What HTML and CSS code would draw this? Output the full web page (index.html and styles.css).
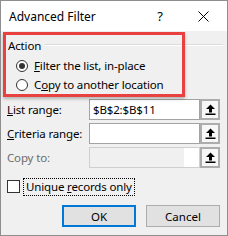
FILE: index.html
```html
<!DOCTYPE html>
<html lang="en">
<head>
    <meta charset="UTF-8">
    <title>Advanced Filter</title>
    <link rel="stylesheet" href="styles.css">
</head>
<body>
    <div class="dialog">
        <!-- Title bar -->
        <div class="titlebar">
            <span class="title">Advanced Filter</span>
            <span class="help">?</span>
            <span class="close">
                <svg width="11" height="11" viewBox="0 0 11 11"><path d="M0.5 0.5 L10.5 10.5 M10.5 0.5 L0.5 10.5" stroke="#000" stroke-width="1" fill="none"/></svg>
            </span>
        </div>

        <div class="content">
            <!-- Action group -->
            <div class="group-head">
                <span>Action</span>
                <span class="group-line"></span>
            </div>
            <div class="option">
                <span class="radio checked"></span>
                <span><u>F</u>ilter the list, in-place</span>
            </div>
            <div class="option">
                <span class="radio"></span>
                <span>C<u>o</u>py to another location</span>
            </div>

            <!-- Ranges -->
            <div class="field">
                <label><u>L</u>ist range:</label>
                <div class="range">$B$2:$B$11</div>
                <span class="pick"><svg width="11" height="11" viewBox="0 0 11 11"><path d="M5.5 0.5 L10 5 L7 5 L7 8.5 L4 8.5 L4 5 L1 5 Z" fill="#000"/><rect x="0.5" y="9.5" width="10" height="1.5" fill="#000"/></svg></span>
            </div>
            <div class="field">
                <label><u>C</u>riteria range:</label>
                <div class="range"></div>
                <span class="pick"><svg width="11" height="11" viewBox="0 0 11 11"><path d="M5.5 0.5 L10 5 L7 5 L7 8.5 L4 8.5 L4 5 L1 5 Z" fill="#000"/><rect x="0.5" y="9.5" width="10" height="1.5" fill="#000"/></svg></span>
            </div>
            <div class="field disabled">
                <label>Copy to:</label>
                <div class="range"></div>
                <span class="pick"><svg width="11" height="11" viewBox="0 0 11 11"><path d="M5.5 0.5 L10 5 L7 5 L7 8.5 L4 8.5 L4 5 L1 5 Z" fill="#000"/><rect x="0.5" y="9.5" width="10" height="1.5" fill="#000"/></svg></span>
            </div>

            <!-- Unique records -->
            <div class="check-row">
                <span class="checkbox"></span>
                <span class="focus">Unique <u>r</u>ecords only</span>
            </div>

            <!-- Buttons -->
            <div class="buttons">
                <button class="btn default">OK</button>
                <button class="btn">Cancel</button>
            </div>
        </div>

        <!-- red highlight around the Action group -->
        <div class="highlight"></div>
    </div>
</body>
</html>
```

FILE: styles.css
```css
body {
    margin: 0;
    font-family: 'Noto Sans', sans-serif;
    font-size: 11.5px;
    letter-spacing: -0.15px;
    color: #000;
    background: #fff;
}
.dialog {
    position: relative;
    width: 228px;
    height: 236px;
    box-sizing: border-box;
    border: 1px solid #8e8e8e;
    background: #f0f0f0;
    overflow: hidden;
}
.titlebar {
    height: 30px;
    background: #fff;
    display: flex;
    align-items: center;
    padding-left: 8px;
    font-size: 12px;
    letter-spacing: 0;
}
.title {
    flex: 1;
}
.help {
    font-size: 13px;
    margin-right: 35px;
}
.close {
    display: flex;
    margin-right: 18px;
}
.content {
    padding: 0 7px 0 6px;
}
.group-head {
    display: flex;
    align-items: center;
    height: 14px;
    margin-top: 7px;
    padding-left: 1px;
}
.group-line {
    flex: 1;
    height: 0;
    border-top: 1px solid #dcdcdc;
    border-bottom: 1px solid #fff;
    margin-left: 4px;
    margin-right: -3px;
}
.option {
    display: flex;
    align-items: center;
    height: 19px;
    padding-left: 9px;
}
.group-head + .option {
    margin-top: 4px;
}
.radio {
    width: 12px;
    height: 12px;
    box-sizing: border-box;
    border: 1px solid #333;
    border-radius: 50%;
    background: #fff;
    margin-right: 6px;
    display: flex;
    align-items: center;
    justify-content: center;
}
.radio.checked::after {
    content: "";
    width: 6px;
    height: 6px;
    border-radius: 50%;
    background: #333;
}
.field {
    display: flex;
    align-items: center;
    height: 21px;
    margin-top: 3px;
}
.option + .field {
    margin-top: 5px;
}
.field label {
    width: 82px;
}
.range {
    width: 111px;
    height: 21px;
    box-sizing: border-box;
    border: 1px solid #a3a3a3;
    background: #fff;
    padding-left: 3px;
    line-height: 19px;
}
.pick {
    width: 20px;
    height: 21px;
    box-sizing: border-box;
    border: 2px solid #adadad;
    background: #f7f7f7;
    display: flex;
    align-items: center;
    justify-content: center;
}
.disabled label {
    color: #6d6d6d;
}
.disabled .range {
    background: #f0f0f0;
    border-color: #cfcfcf;
    box-shadow: inset -15px 0 0 #fff;
}
.check-row {
    display: flex;
    align-items: center;
    height: 19px;
    margin-top: 9px;
}
.checkbox {
    width: 13px;
    height: 13px;
    box-sizing: border-box;
    border: 1px solid #333;
    background: #fff;
    margin-right: 3px;
}
.focus {
    border: 1px dotted #000;
    padding: 0 2px 1px 2px;
}
.buttons {
    display: flex;
    justify-content: flex-end;
    gap: 10px;
    margin-top: 9px;
}
.btn {
    width: 74px;
    height: 22px;
    box-sizing: border-box;
    background: #e1e1e1;
    border: 1px solid #adadad;
    font-family: 'Noto Sans', sans-serif;
    font-size: 11.5px;
    color: #000;
    padding: 0;
}
.btn.default {
    border: 2px solid #0078d7;
}
.highlight {
    position: absolute;
    left: 2px;
    top: 31px;
    width: 182px;
    height: 65px;
    box-sizing: border-box;
    border: 3px solid #e8413f;
    box-shadow: 0 2px 3px rgba(0, 0, 0, 0.25);
}
```
